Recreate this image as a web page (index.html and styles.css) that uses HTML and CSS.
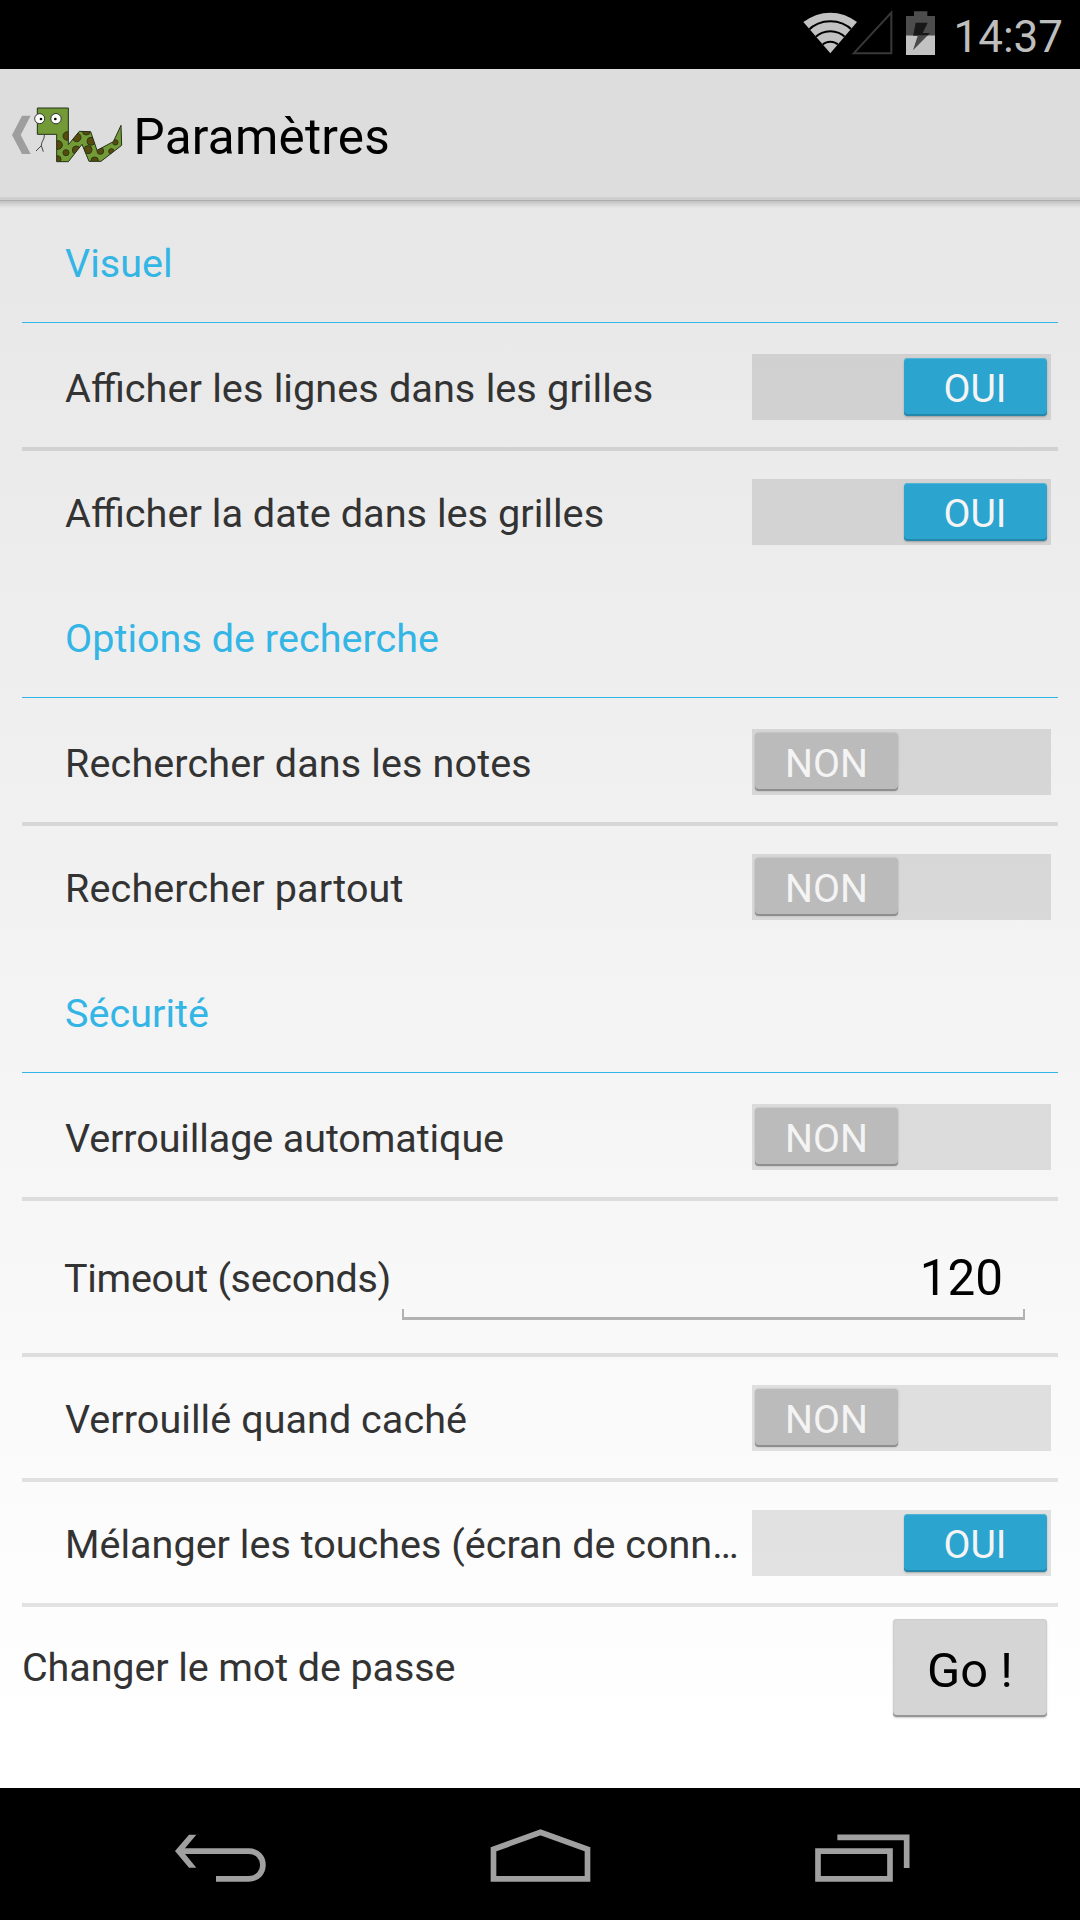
FILE: index.html
```html
<!DOCTYPE html>
<html lang="fr">
<head>
<meta charset="utf-8">
<title>Paramètres</title>
<link rel="stylesheet" href="styles.css">
</head>
<body>
<div class="status-bar">
  <svg class="status-icons" viewBox="0 0 480 207" aria-hidden="true">
    <defs><clipPath id="fan"><path d="M151 160L70 66Q108 38 151 38T231 66Z"/></clipPath></defs>
    <path fill="#c2c2c2" d="M151 160L70 66Q108 38 151 38T231 66Z"/>
    <g clip-path="url(#fan)" fill="none" stroke="#000" stroke-width="6">
      <circle cx="151" cy="160" r="96"/><circle cx="151" cy="160" r="66"/><circle cx="151" cy="160" r="35"/>
    </g>
    <path d="M221 160L334 38V160Z" fill="none" stroke="#383838" stroke-width="6"/>
    <path fill="#4d4d4d" d="M378 48H402V34H442V48H465V106H378Z"/>
    <path fill="#c2c2c2" d="M378 106H465V165H378Z"/>
    <path fill="#4a4a4a" d="M407 68H443L428 99H450L399 151L413 108H399Z"/>
    <path fill="#181818" d="M407 68H443L428 99H450L443 106H400Z"/>
  </svg>
  <time class="clock">14:37</time>
</div>

<header class="action-bar">
  <svg class="up-icon" viewBox="0 -63 420 396" aria-hidden="true">
    <defs>
      <clipPath id="snake"><path d="M112 54H205V164L238 124L272 125L291 181L340 155L363 106L365 166L303 214H267L246 163L205 215H170V133H112Z"/></clipPath>
    </defs>
    <path fill="#9e9e9e" d="M36 135L66 77H92L62 135L92 192H66Z"/>
    <path fill="#729a36" d="M112 54H205V164L238 124L272 125L291 181L340 155L363 106L365 166L303 214H267L246 163L205 215H170V133H112Z"/>
    <g clip-path="url(#snake)" fill="#574a0d" stroke="#2d3a14" stroke-width="3">
      <circle cx="202" cy="138" r="13"/><circle cx="174" cy="165" r="13"/><circle cx="198" cy="188" r="9"/>
      <circle cx="172" cy="208" r="11"/><circle cx="230" cy="142" r="13"/><circle cx="259" cy="123" r="12"/>
      <circle cx="229" cy="180" r="12"/><circle cx="273" cy="154" r="12"/><circle cx="264" cy="179" r="12"/>
      <circle cx="301" cy="183" r="10"/><circle cx="284" cy="212" r="11"/><circle cx="334" cy="184" r="8"/>
      <circle cx="346" cy="157" r="8"/>
    </g>
    <path fill="none" stroke="#25301a" stroke-width="3" d="M112 54H205V164L238 124L272 125L291 181L340 155L363 106L365 166L303 214H267L246 163L205 215H170V133H112Z"/>
    <g fill="#fff" stroke="#333" stroke-width="3"><circle cx="119" cy="86" r="15"/><circle cx="168" cy="86" r="15.500"/></g>
    <circle cx="123" cy="87" r="4"/><circle cx="166" cy="87" r="4"/>
    <path fill="none" stroke="#444" stroke-width="3" d="M133 135C134 150 124 152 124 167L108 183M124 167L130 185"/>
  </svg>
  <h1 class="title">Paramètres</h1>
</header>

<main class="settings">
  <section>
    <h2 class="heading">Visuel</h2>
    <div class="row"><span class="label joined spaced">Afficher les lignes dans les grilles</span><span class="switch on"><span class="thumb">OUI</span></span></div>
    <div class="row"><span class="label joined">Afficher la date dans les grilles</span><span class="switch on"><span class="thumb">OUI</span></span></div>
  </section>
  <section>
    <h2 class="heading">Options de recherche</h2>
    <div class="row"><span class="label loose">Rechercher dans les notes</span><span class="switch"><span class="thumb">NON</span></span></div>
    <div class="row"><span class="label loose">Rechercher partout</span><span class="switch"><span class="thumb">NON</span></span></div>
  </section>
  <section>
    <h2 class="heading">Sécurité</h2>
    <div class="row"><span class="label snug">Verrouillage automatique</span><span class="switch"><span class="thumb">NON</span></span></div>
    <div class="row timeout"><label class="label" for="timeout">Timeout (seconds)</label><input class="field" id="timeout" type="text" value="120"></div>
    <div class="row"><span class="label">Verrouillé quand caché</span><span class="switch"><span class="thumb">NON</span></span></div>
    <div class="row"><span class="label even">Mélanger les touches (écran de conn…</span><span class="switch on"><span class="thumb">OUI</span></span></div>
    <div class="row password"><span class="label snug">Changer le mot de passe</span><button class="button" type="button">Go !</button></div>
  </section>
</main>

<nav class="nav-bar">
  <svg class="nav-icon" viewBox="-240 -6 960 396" aria-label="Retour">
    <path fill="none" stroke="#a0a0a0" stroke-width="17" d="M120 183.500H326C383 183.500 383 266.500 326 266.500H228"/>
    <path fill="#a0a0a0" d="M105 183L147 134H169L128 183L169 233H147Z"/>
  </svg>
  <svg class="nav-icon" viewBox="720 -6 960 396" aria-label="Accueil">
    <path fill="none" stroke="#a0a0a0" stroke-width="17" d="M1060.500 266.500V178L1201.500 127L1342.500 178V266.500Z"/>
  </svg>
  <svg class="nav-icon" viewBox="-240 -6 960 396" aria-label="Applications récentes">
    <path fill="none" stroke="#a0a0a0" stroke-width="17" d="M114 183.500H330V266.500H114ZM172 142H380V234"/>
  </svg>
</nav>
</body>
</html>
```
FILE: styles.css
```css
* {
  box-sizing: border-box;
}

body {
  margin: 0;
  width: 1080px;
  height: 1920px;
  display: flex;
  flex-direction: column;
  background: #000;
  font-family: Roboto, "Noto Sans", sans-serif;
  font-size: 39.5px;
  color: #333;
}

h1,
h2 {
  margin: 0;
  font-weight: 400;
}

.status-bar {
  height: 69px;
  flex: none;
  display: flex;
  justify-content: flex-end;
  align-items: center;
  padding-right: 17px;
}

.status-icons {
  width: 160px;
  height: 69px;
  margin-right: 13px;
}

.clock {
  padding-top: 4px;
  font-size: 44px;
  color: #bebebe;
}

.action-bar {
  position: relative;
  height: 132px;
  flex: none;
  display: flex;
  align-items: center;
  background: linear-gradient(#ddd 128px, #cfcfcf 128px);
  border-bottom: 1px solid #a9adab;
}

.action-bar::after {
  content: "";
  position: absolute;
  left: 0;
  right: 0;
  top: 132px;
  height: 7px;
  background: linear-gradient(rgba(0, 0, 0, 0.16), rgba(0, 0, 0, 0));
}

.up-icon {
  width: 140px;
  height: 132px;
}

.title {
  margin-left: -6.5px;
  padding-top: 5px;
  font-size: 49.4px;
  letter-spacing: 0.25px;
  color: #000;
}

.settings {
  flex: 1;
  padding: 0 22px;
  background: linear-gradient(#e7e7e7, #fff 1540px);
}

.heading {
  height: 122px;
  display: flex;
  align-items: center;
  padding: 4px 0 0 43px;
  margin-bottom: 3px;
  border-bottom: 1px solid #33b5e5;
  font-size: 39.5px;
  letter-spacing: 0.04px;
  color: #33b5e5;
}

.row {
  height: 125px;
  display: flex;
  align-items: center;
  padding: 0 7px 0 43px;
  border-bottom: 4px solid rgba(0, 0, 0, 0.105);
}

.row:last-child {
  border-color: transparent;
}

.label {
  flex: 1;
  padding-top: 4px;
  letter-spacing: 0.06px;
  white-space: nowrap;
}

.loose {
  letter-spacing: 0.14px;
}

.snug {
  letter-spacing: -0.1px;
}

.even {
  letter-spacing: 0.02px;
}

.joined {
  font-size: 39.7px;
  letter-spacing: 0;
}

.spaced {
  word-spacing: 0.45px;
}

.switch {
  width: 299px;
  height: 66px;
  display: flex;
  align-items: center;
  padding: 0 3px;
  background: rgba(0, 0, 0, 0.105);
}

.switch.on {
  justify-content: flex-end;
  padding-right: 4px;
}

.thumb {
  width: 143px;
  height: 58px;
  display: flex;
  align-items: center;
  justify-content: center;
  padding-top: 4px;
  border-radius: 4px;
  background: #bbb;
  box-shadow: inset 0 -2px #8e8e8e, 0 0 2px rgba(0, 0, 0, 0.25);
  font-size: 39.2px;
  color: #f4f4f4;
}

.on .thumb {
  padding-right: 1px;
  background: #2ba4cf;
  box-shadow: inset 0 -2px #2587a9, inset 0 1px #52b4d6, 0 1px 2px rgba(0, 0, 0, 0.25);
}

.timeout {
  height: 156px;
  padding: 0 33px 0 42px;
}

.timeout .label {
  flex: 0 0 338px;
  padding-top: 3px;
  letter-spacing: -0.3px;
}

.field {
  flex: 1;
  min-width: 0;
  height: 80px;
  margin-top: 6px;
  padding: 0 22px 4px 0;
  border: 0;
  background:
    linear-gradient(#b2b2b2, #b2b2b2) bottom / 100% 3px no-repeat,
    linear-gradient(#b2b2b2, #b2b2b2) left bottom / 2px 11px no-repeat,
    linear-gradient(#b2b2b2, #b2b2b2) right bottom / 2px 11px no-repeat;
  font: 49.4px Roboto, "Noto Sans", sans-serif;
  text-align: right;
  color: #000;
  outline: 0;
}

.password {
  padding: 0 11px 0 0;
}

.password .label {
  padding-top: 0;
}

.button {
  width: 154px;
  height: 98px;
  margin: 0;
  padding: 6px 0 0;
  border: 0;
  border-radius: 4px;
  background: #d5d5d5;
  box-shadow: inset 0 -2px #959595, inset 0 0 2px #bbb, 0 1px 2px rgba(0, 0, 0, 0.2);
  font: 48.8px Roboto, "Noto Sans", sans-serif;
  color: #000;
}

.nav-bar {
  height: 132px;
  flex: none;
  display: flex;
  justify-content: center;
}

.nav-icon {
  width: 320px;
  height: 132px;
}
```
